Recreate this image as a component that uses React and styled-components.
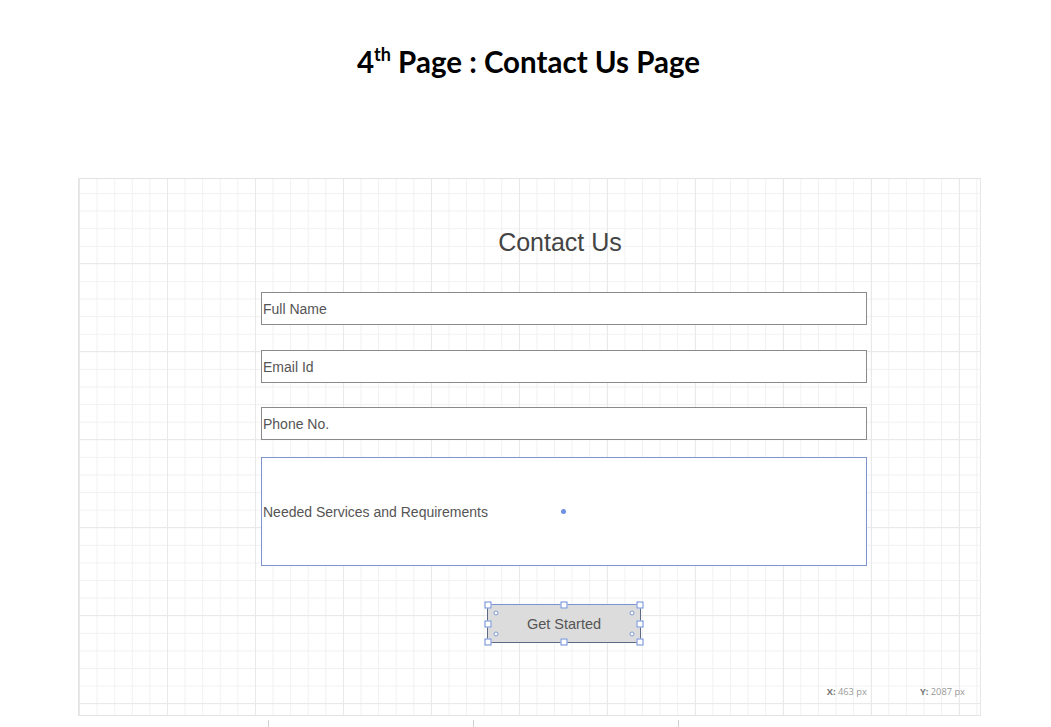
import React from "react";
import styled, { createGlobalStyle } from "styled-components";

const GlobalStyle = createGlobalStyle`
  html, body {
    margin: 0;
    padding: 0;
    background: #ffffff;
  }
  body {
    font-family: "Liberation Sans", Arial, sans-serif;
  }
`;

const Page = styled.div`
  width: 1051px;
  height: 727px;
  overflow: hidden;
  background: #fff;
`;

const PageTitle = styled.h1`
  margin: 0;
  padding-top: 44px;
  height: 178px;
  box-sizing: border-box;
  text-align: center;
  font-family: Lato, "Open Sans", sans-serif;
  font-weight: 700;
  font-size: 29.5px;
  line-height: 36px;
  color: #000;
  padding-left: 6px;

  sup {
    font-size: 18px;
    line-height: 0;
    vertical-align: 12px;
  }
`;

const Canvas = styled.div`
  margin-left: 78px;
  width: 903px;
  height: 538px;
  box-sizing: border-box;
  border: 1px solid #e3e3e3;
  border-right-color: #e8e8e8;
  background-color: #fff;
  background-image:
    linear-gradient(to right, #e9e9e9 1px, transparent 1px),
    linear-gradient(to bottom, #e9e9e9 1px, transparent 1px),
    linear-gradient(to right, #f1f1f1 1px, transparent 1px),
    linear-gradient(to bottom, #f1f1f1 1px, transparent 1px);
  background-size: 88px 88px, 88px 88px, 17.6px 17.6px, 17.6px 17.6px;
  background-position: 0 84px, 0 84px, 0 14px, 0 14px;
  display: flex;
  flex-direction: column;
`;

const Form = styled.div`
  margin-left: 182px;
  width: 606px;
  display: flex;
  flex-direction: column;
`;

const Heading = styled.h2`
  margin: 0;
  padding-top: 48px;
  padding-right: 8px;
  text-align: center;
  font-weight: 400;
  font-size: 25px;
  line-height: 30px;
  color: #444;
`;

const Field = styled.div`
  box-sizing: border-box;
  height: ${(p) => p.$h || 33}px;
  margin-top: ${(p) => p.$gap}px;
  background: #fff;
  border: 1px solid ${(p) => (p.$active ? "#7f93cf" : "#8a8a8a")};
  display: flex;
  align-items: center;
  padding-left: 1px;
  font-size: 14px;
  color: #555;
  position: relative;
`;

const CenterDot = styled.span`
  position: absolute;
  left: 299px;
  top: 50%;
  width: 5px;
  height: 5px;
  margin-top: -3px;
  border-radius: 50%;
  background: #6f8fe0;
`;

const ButtonRow = styled.div`
  margin-top: 38px;
  display: flex;
  justify-content: center;
`;

const Button = styled.button`
  position: relative;
  width: 154px;
  height: 39px;
  box-sizing: border-box;
  background: #dcdcdc;
  border: 1px solid #5d6a86;
  border-top-color: #7d93cf;
  font-family: "Liberation Sans", Arial, sans-serif;
  font-size: 14.5px;
  color: #555;
  padding: 0;
`;

const Handle = styled.span`
  position: absolute;
  width: 5px;
  height: 5px;
  background: #fff;
  border: 1px solid #6b8ad6;
  left: ${(p) => p.$x};
  top: ${(p) => p.$y};
  transform: translate(-50%, -50%);
`;

const Ring = styled.span`
  position: absolute;
  width: 3px;
  height: 3px;
  border-radius: 50%;
  border: 1px solid #7f99d9;
  background: #fff;
  left: ${(p) => p.$x};
  top: ${(p) => p.$y};
  transform: translate(-50%, -50%);
`;

const Status = styled.div`
  margin-top: auto;
  margin-bottom: 17px;
  display: flex;
  justify-content: flex-end;
  gap: 53px;
  padding-right: 15px;
  font-family: "Open Sans", sans-serif;
  font-size: 9.3px;
  color: #999;

  b {
    color: #777;
  }
`;

const Ruler = styled.div`
  display: flex;
  gap: 204px;
  margin-left: 268px;
  margin-top: 4px;
`;

const Tick = styled.span`
  width: 1px;
  height: 7px;
  background: #d0d0d0;
`;

const handles = [
  ["0%", "0%"],
  ["50%", "0%"],
  ["100%", "0%"],
  ["0%", "50%"],
  ["100%", "50%"],
  ["0%", "100%"],
  ["50%", "100%"],
  ["100%", "100%"],
];

const rings = [
  ["8px", "8px"],
  ["calc(100% - 8px)", "8px"],
  ["8px", "calc(100% - 8px)"],
  ["calc(100% - 8px)", "calc(100% - 8px)"],
];

export default function App() {
  return (
    <Page>
      <GlobalStyle />
      <PageTitle>
        4<sup>th</sup> Page : Contact Us Page
      </PageTitle>
      <Canvas>
        <Form>
          <Heading>Contact Us</Heading>
          <Field $gap={35}>Full Name</Field>
          <Field $gap={25}>Email Id</Field>
          <Field $gap={24}>Phone No.</Field>
          <Field $gap={17} $h={109} $active>
            Needed Services and Requirements
            <CenterDot />
          </Field>
          <ButtonRow>
            <Button>
              Get Started
              {handles.map(([x, y]) => (
                <Handle key={x + y} $x={x} $y={y} />
              ))}
              {rings.map(([x, y]) => (
                <Ring key={x + y} $x={x} $y={y} />
              ))}
            </Button>
          </ButtonRow>
        </Form>
        <Status>
          <span>
            <b>X:</b> 463 px
          </span>
          <span>
            <b>Y:</b> 2087 px
          </span>
        </Status>
      </Canvas>
      <Ruler>
        <Tick />
        <Tick />
        <Tick />
      </Ruler>
    </Page>
  );
}
